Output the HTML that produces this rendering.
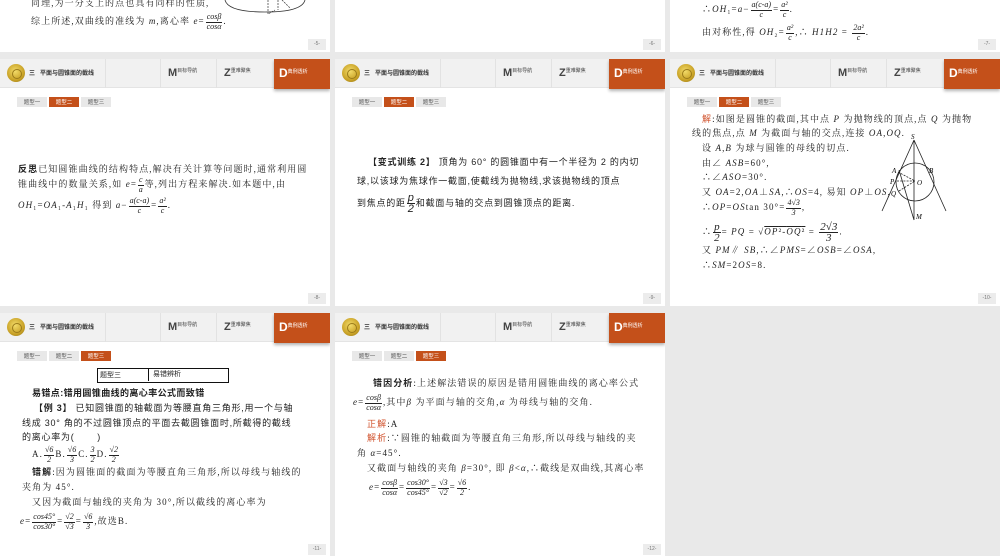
<!DOCTYPE html>
<html><head><meta charset="utf-8"><style>
*{margin:0;padding:0;box-sizing:border-box}
body{width:1000px;height:556px;background:#e9e9e9;position:relative;overflow:hidden;font-family:"Liberation Serif","Noto Serif CJK SC",serif;color:#222}
.s{position:absolute;width:330px;background:#fff;overflow:hidden}
.hd{position:absolute;left:0;top:0;width:330px;height:29px;background:#f1f1f1;border-bottom:1px solid #e4e4e4}
.logo{position:absolute;left:7px;top:5px;width:18px;height:18px;border-radius:50%;background:radial-gradient(circle at 45% 40%,#f3dc6a,#c9a227 60%,#8d7012);}
.logo:after{content:"";position:absolute;left:5px;top:5px;width:8px;height:8px;border-radius:50%;border:1px solid #9a7a1a}
.ttl{position:absolute;left:29px;top:9px;font:bold 6px "Liberation Sans","Noto Sans CJK SC",sans-serif;color:#333;white-space:nowrap}
.dv{position:absolute;top:0;width:1px;height:29px;background:#e2e2e2}
.nv{position:absolute;top:8px;font:bold 11px "Liberation Sans",sans-serif;color:#444;white-space:nowrap}
.nv small{font:5px "Noto Sans CJK SC",sans-serif;vertical-align:4px;letter-spacing:0}
.dt{position:absolute;left:274px;top:0;width:56px;height:30px;background:#c4501a;box-shadow:0 2px 3px rgba(0,0,0,.3);color:#fff;font:bold 12px "Liberation Sans",sans-serif;padding:7px 0 0 5px}
.dt small{font:5px "Noto Sans CJK SC",sans-serif;vertical-align:4px}
.tabs{position:absolute;left:17px;top:38px;font:5.5px "Noto Sans CJK SC",sans-serif;color:#555}
.tabs span{display:inline-block;width:30px;height:10px;line-height:10px;text-align:center;background:#e8e8e8;margin-right:2px}
.tabs span.a{background:#c4501a;color:#fff}
.pg{position:absolute;right:4px;width:18px;height:11px;background:#ececec;font:5px "Liberation Sans",sans-serif;color:#777;text-align:center;line-height:11px}
.t{position:absolute;font-size:9px;line-height:14.5px;white-space:nowrap;letter-spacing:1.1px}
.sn{font-family:'Liberation Sans','Noto Sans CJK SC',sans-serif;letter-spacing:.75px}
.fr{display:inline-flex;flex-direction:column;vertical-align:middle;text-align:center;font-size:8px;line-height:8.5px;letter-spacing:0;font-style:italic;margin:0 1px}
.fr b{font-weight:normal;border-bottom:0.7px solid #222;padding:0 1px}
i{font-style:italic}
.r{color:#d0502a;font-family:"Liberation Sans","Noto Sans CJK SC",sans-serif}
.k{font-weight:bold;font-family:"Liberation Sans","Noto Sans CJK SC",sans-serif}
</style></head><body>

<!-- Row 0 -->
<div class="s" style="left:0;top:0;height:52px">
 <div class="t" style="left:31px;top:-4px">同理,为一分支上的点也具有同样的性质,</div>
 <div class="t" style="left:31px;top:13px">综上所述,双曲线的准线为 <i>m</i>,离心率 <i>e</i>=<span class="fr"><b>cos<i>β</i></b><span>cos<i>α</i></span></span>.</div>
 <svg style="position:absolute;left:220px;top:0" width="90" height="20"><path d="M5 0 Q8 12 45 12 Q82 12 85 0" fill="none" stroke="#333" stroke-width=".8"/><path d="M48 0 L48 14 L55 10 M58 0 L58 10 M62 0 L70 8" fill="none" stroke="#333" stroke-width=".7" stroke-dasharray="2 1"/></svg>
 <div class="pg" style="top:39px">-5-</div>
</div>
<div class="s" style="left:335px;top:0;height:52px">
 <div class="pg" style="top:39px">-6-</div>
</div>
<div class="s" style="left:670px;top:0;height:52px">
 <div class="t" style="left:32px;top:1px">∴<i>OH</i>₁=<i>a</i>−<span class="fr"><b>a(c-a)</b><span>c</span></span>=<span class="fr"><b>a²</b><span>c</span></span>.</div>
 <div class="t" style="left:32px;top:24px">由对称性,得 <i>OH</i>₂=<span class="fr"><b>a²</b><span>c</span></span>,∴ <i>H1H2</i> = <span class="fr"><b>2a²</b><span>c</span></span>.</div>
 <div class="pg" style="top:39px">-7-</div>
</div>

<!-- Row 1 -->
<div class="s" style="left:0;top:59px;height:247px">
 <div class="hd"></div><div class="logo"></div><div class="ttl">三&nbsp;&nbsp; 平面与圆锥面的截线</div>
 <div class="dv" style="left:105px"></div><div class="dv" style="left:160px"></div><div class="dv" style="left:216px"></div>
 <div class="nv" style="left:168px">M<small>目标导航</small></div><div class="nv" style="left:224px">Z<small>重难聚焦</small></div><div class="dt">D<small>典例透析</small></div>
 <div class="tabs"><span>题型一</span><span class="a">题型二</span><span>题型三</span></div>
 <div class="t" style="left:18px;top:103px"><span class="k">反思</span>已知圆锥曲线的结构特点,解决有关计算等问题时,通常利用圆</div>
 <div class="t" style="left:18px;top:117px">锥曲线中的数量关系,如 <i>e</i>=<span class="fr"><b>c</b><span>a</span></span>等,列出方程来解决.如本题中,由</div>
 <div class="t" style="left:18px;top:138px"><i>OH</i>₁=<i>OA</i>₁-<i>A</i>₁<i>H</i>₁ 得到 <i>a</i>−<span class="fr"><b>a(c-a)</b><span>c</span></span>=<span class="fr"><b>a²</b><span>c</span></span>.</div>
 <div class="pg" style="top:234px">-8-</div>
</div>
<div class="s" style="left:335px;top:59px;height:247px">
 <div class="hd"></div><div class="logo"></div><div class="ttl">三&nbsp;&nbsp; 平面与圆锥面的截线</div>
 <div class="dv" style="left:105px"></div><div class="dv" style="left:160px"></div><div class="dv" style="left:216px"></div>
 <div class="nv" style="left:168px">M<small>目标导航</small></div><div class="nv" style="left:224px">Z<small>重难聚焦</small></div><div class="dt">D<small>典例透析</small></div>
 <div class="tabs"><span>题型一</span><span class="a">题型二</span><span>题型三</span></div>
 <div class="t sn" style="left:33px;top:96px"><b>【变式训练 2】</b> 顶角为 60° 的圆锥面中有一个半径为 2 的内切</div>
 <div class="t sn" style="left:22px;top:115px">球,以该球为焦球作一截面,使截线为抛物线,求该抛物线的顶点</div>
 <div class="t sn" style="left:22px;top:134px">到焦点的距<span class="fr" style="font-size:11px;line-height:10px"><b>p</b><span>2</span></span>和截面与轴的交点到圆锥顶点的距离.</div>
 <div class="pg" style="top:234px">-9-</div>
</div>
<div class="s" style="left:670px;top:59px;height:247px">
 <div class="hd"></div><div class="logo"></div><div class="ttl">三&nbsp;&nbsp; 平面与圆锥面的截线</div>
 <div class="dv" style="left:105px"></div><div class="dv" style="left:160px"></div><div class="dv" style="left:216px"></div>
 <div class="nv" style="left:168px">M<small>目标导航</small></div><div class="nv" style="left:224px">Z<small>重难聚焦</small></div><div class="dt">D<small>典例透析</small></div>
 <div class="tabs"><span>题型一</span><span class="a">题型二</span><span>题型三</span></div>
 <div class="t" style="left:32px;top:53px"><span class="r">解</span>:如图是圆锥的截面,其中点 <i>P</i> 为抛物线的顶点,点 <i>Q</i> 为抛物</div>
 <div class="t" style="left:22px;top:67px">线的焦点,点 <i>M</i> 为截面与轴的交点,连接 <i>OA</i>,<i>OQ</i>.</div>
 <div class="t" style="left:32px;top:82px">设 <i>A</i>,<i>B</i> 为球与圆锥的母线的切点.</div>
 <div class="t" style="left:32px;top:97px">由∠ <i>ASB</i>=60°,</div>
 <div class="t" style="left:32px;top:111px">∴∠<i>ASO</i>=30°.</div>
 <div class="t" style="left:32px;top:126px">又 <i>OA</i>=2,<i>OA</i>⊥<i>SA</i>,∴<i>OS</i>=4, 易知 <i>OP</i>⊥<i>OS</i>,</div>
 <div class="t" style="left:32px;top:140px">∴<i>OP</i>=<i>OS</i>tan 30°=<span class="fr"><b>4√3</b><span>3</span></span>,</div>
 <div class="t" style="left:32px;top:163px">∴<span class="fr" style="font-size:11px;line-height:10px"><b>p</b><span>2</span></span>= <i>PQ</i> = √<span style="text-decoration:overline"><i>OP</i>²-<i>OQ</i>²</span> = <span class="fr" style="font-size:11px;line-height:10px"><b>2√3</b><span>3</span></span>.</div>
 <div class="t" style="left:32px;top:184px">又 <i>PM</i>∥ <i>SB</i>,∴∠<i>PMS</i>=∠<i>OSB</i>=∠<i>OSA</i>,</div>
 <div class="t" style="left:32px;top:199px">∴<i>SM</i>=2<i>OS</i>=8.</div>
 <svg style="position:absolute;left:205px;top:75px" width="85" height="95" viewBox="875 134 85 95">
  <g fill="none" stroke="#222" stroke-width=".8">
   <path d="M914 140 L882 211 M914 140 L946 211 M914 140 L914 220 M899 170 L914 220"/>
   <circle cx="915" cy="182" r="19"/>
   <path d="M897 181 L915 181 M898 172 L915 181 M899 191 L915 181" stroke-dasharray="2 1.2"/>
  </g>
  <g font-size="7" font-style="italic" font-family="Liberation Serif">
   <text x="911" y="139">S</text><text x="892" y="173">A</text><text x="929" y="173">B</text><text x="890" y="184">P</text><text x="917" y="185">O</text><text x="891" y="196">Q</text><text x="916" y="219">M</text>
  </g>
 </svg>
 <div class="pg" style="top:234px">-10-</div>
</div>

<!-- Row 2 -->
<div class="s" style="left:0;top:313px;height:243px">
 <div class="hd"></div><div class="logo"></div><div class="ttl">三&nbsp;&nbsp; 平面与圆锥面的截线</div>
 <div class="dv" style="left:105px"></div><div class="dv" style="left:160px"></div><div class="dv" style="left:216px"></div>
 <div class="nv" style="left:168px">M<small>目标导航</small></div><div class="nv" style="left:224px">Z<small>重难聚焦</small></div><div class="dt">D<small>典例透析</small></div>
 <div class="tabs"><span>题型一</span><span>题型二</span><span class="a">题型三</span></div>
 <div style="position:absolute;left:97px;top:55px;width:132px;height:15px;border:1.5px solid #111;font:7px 'Noto Sans CJK SC',sans-serif;line-height:12px"><span style="position:absolute;left:2px">题型三</span><span style="position:absolute;left:50px;top:-1px;height:13px;border-left:1px solid #111;padding-left:4px">易错辨析</span></div>
 <div class="t sn" style="left:32px;top:73px;font-weight:bold;letter-spacing:.4px">易错点:错用圆锥曲线的离心率公式而致错</div>
 <div class="t sn" style="left:34px;top:88px"><b>【例 3】</b> 已知圆锥面的轴截面为等腰直角三角形,用一个与轴</div>
 <div class="t sn" style="left:22px;top:103px">线成 30° 角的不过圆锥顶点的平面去截圆锥面时,所截得的截线</div>
 <div class="t sn" style="left:22px;top:117px">的离心率为(&nbsp;&nbsp;&nbsp;&nbsp;&nbsp;&nbsp;&nbsp;)</div>
 <div class="t" style="left:32px;top:133px">A.<span class="fr"><b>√6</b><span>2</span></span>B.<span class="fr"><b>√6</b><span>3</span></span>C.<span class="fr"><b>3</b><span>2</span></span>D.<span class="fr"><b>√2</b><span>2</span></span></div>
 <div class="t" style="left:32px;top:152px"><span class="k">错解</span>:因为圆锥面的截面为等腰直角三角形,所以母线与轴线的</div>
 <div class="t" style="left:22px;top:167px">夹角为 45°.</div>
 <div class="t" style="left:32px;top:182px">又因为截面与轴线的夹角为 30°,所以截线的离心率为</div>
 <div class="t" style="left:20px;top:200px"><i>e</i>=<span class="fr"><b>cos45°</b><span>cos30°</span></span>=<span class="fr"><b>√2</b><span>√3</span></span>=<span class="fr"><b>√6</b><span>3</span></span>,故选B.</div>
 <div class="pg" style="top:231px">-11-</div>
</div>
<div class="s" style="left:335px;top:313px;height:243px">
 <div class="hd"></div><div class="logo"></div><div class="ttl">三&nbsp;&nbsp; 平面与圆锥面的截线</div>
 <div class="dv" style="left:105px"></div><div class="dv" style="left:160px"></div><div class="dv" style="left:216px"></div>
 <div class="nv" style="left:168px">M<small>目标导航</small></div><div class="nv" style="left:224px">Z<small>重难聚焦</small></div><div class="dt">D<small>典例透析</small></div>
 <div class="tabs"><span>题型一</span><span>题型二</span><span class="a">题型三</span></div>
 <div class="t" style="left:38px;top:63px"><span class="k">错因分析</span>:上述解法错误的原因是错用圆锥曲线的离心率公式</div>
 <div class="t" style="left:18px;top:81px"><i>e</i>=<span class="fr"><b>cos<i>β</i></b><span>cos<i>α</i></span></span>,其中<i>β</i> 为平面与轴的交角,<i>α</i> 为母线与轴的交角.</div>
 <div class="t" style="left:32px;top:104px"><span class="r">正解</span>:A</div>
 <div class="t" style="left:32px;top:118px"><span class="r">解析</span>:∵圆锥的轴截面为等腰直角三角形,所以母线与轴线的夹</div>
 <div class="t" style="left:22px;top:133px">角 <i>α</i>=45°.</div>
 <div class="t" style="left:32px;top:148px">又截面与轴线的夹角 <i>β</i>=30°, 即 <i>β</i>&lt;<i>α</i>,∴截线是双曲线,其离心率</div>
 <div class="t" style="left:34px;top:166px"><i>e</i>=<span class="fr"><b>cos<i>β</i></b><span>cos<i>α</i></span></span>=<span class="fr"><b>cos30°</b><span>cos45°</span></span>=<span class="fr"><b>√3</b><span>√2</span></span>=<span class="fr"><b>√6</b><span>2</span></span>.</div>
 <div class="pg" style="top:231px">-12-</div>
</div>
</body></html>
